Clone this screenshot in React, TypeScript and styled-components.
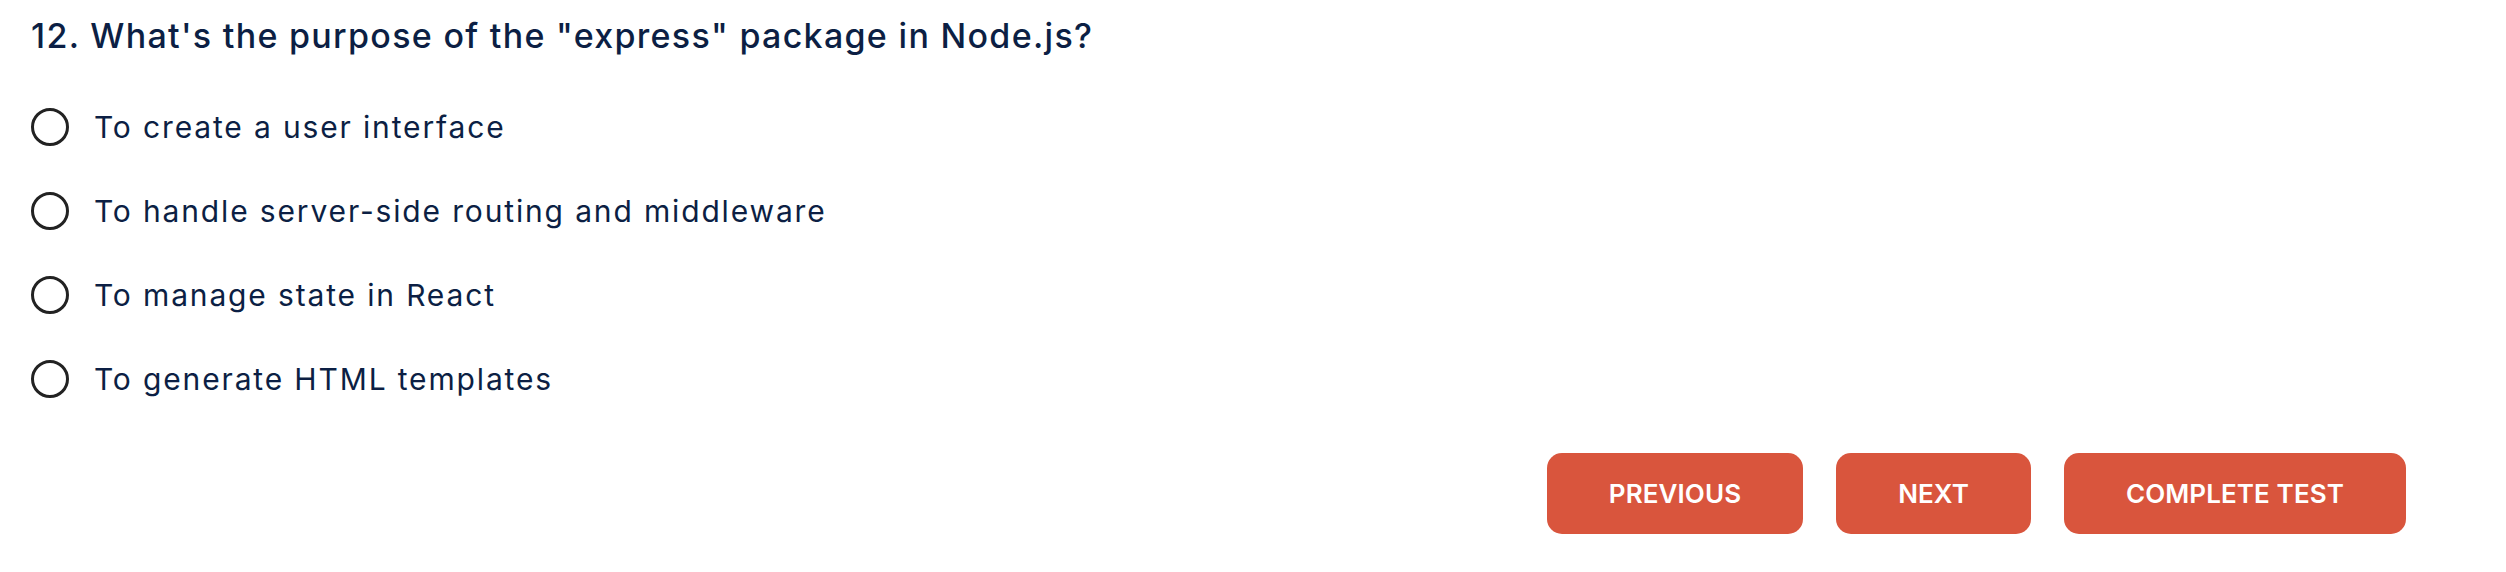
import React, { useState } from 'react';
import styled, { createGlobalStyle } from 'styled-components';

const GlobalStyle = createGlobalStyle`
	html, body {
		margin: 0;
		padding: 0;
		background: #ffffff;
	}
	body {
		font-family: 'Inter', 'Noto Sans', sans-serif;
		color: #0c1f44;
	}
`;

const Page = styled.main`
	box-sizing: border-box;
	width: 100%;
	padding: 12px 100px 0 31px;
`;

const Question = styled.h2`
	margin: 0;
	font-size: 34px;
	line-height: 48px;
	font-weight: 500;
	letter-spacing: 1.3px;
	color: #0c1f44;
`;

const Options = styled.ul`
	list-style: none;
	margin: 25px 0 0;
	padding: 0;
	display: flex;
	flex-direction: column;
`;

const OptionRow = styled.li`
	height: 84px;
	display: flex;
	align-items: center;
`;

const OptionLabel = styled.label`
	display: flex;
	align-items: center;
	gap: 25px;
	font-size: 30px;
	font-weight: 400;
	letter-spacing: 1.85px;
	color: #0c1f44;
	cursor: pointer;
`;

const Radio = styled.input.attrs({
	type: 'radio'
})`
	appearance: none;
	margin: 0;
	width: 38px;
	height: 38px;
	border: 3.5px solid #222222;
	border-radius: 50%;
	box-sizing: border-box;
	background: #fff;
	cursor: pointer;
	&:checked {
		background: radial-gradient(circle, #222222 45%, #fff 48%);
	}
`;

const Footer = styled.div`
	margin-top: 32px;
	display: flex;
	justify-content: flex-end;
	gap: 33px;
`;

const ActionButton = styled.button`
	height: 81px;
	padding: 0 62px;
	border: 0;
	border-radius: 15px;
	background: #d9553d;
	color: #ffffff;
	font-family: 'Inter', 'Noto Sans', sans-serif;
	font-size: 26px;
	font-weight: 600;
	letter-spacing: 0.1px;
	text-transform: uppercase;
	cursor: pointer;
	&:hover {
		background: #cf4c35;
	}
`;

const answers = [
	'To create a user interface',
	'To handle server-side routing and middleware',
	'To manage state in React',
	'To generate HTML templates'
];

export default function App() {
	const [picked, setPicked] = useState<number | null>(null);

	return (
		<>
			<GlobalStyle />
			<Page>
				<Question>12. What's the purpose of the "express" package in Node.js?</Question>
				<Options>
					{answers.map((text, i) => (
						<OptionRow key={text}>
							<OptionLabel>
								<Radio
									name="q12"
									checked={picked === i}
									onChange={() => setPicked(i)}
								/>
								{text}
							</OptionLabel>
						</OptionRow>
					))}
				</Options>
				<Footer>
					<ActionButton>Previous</ActionButton>
					<ActionButton>Next</ActionButton>
					<ActionButton>Complete Test</ActionButton>
				</Footer>
			</Page>
		</>
	);
}
